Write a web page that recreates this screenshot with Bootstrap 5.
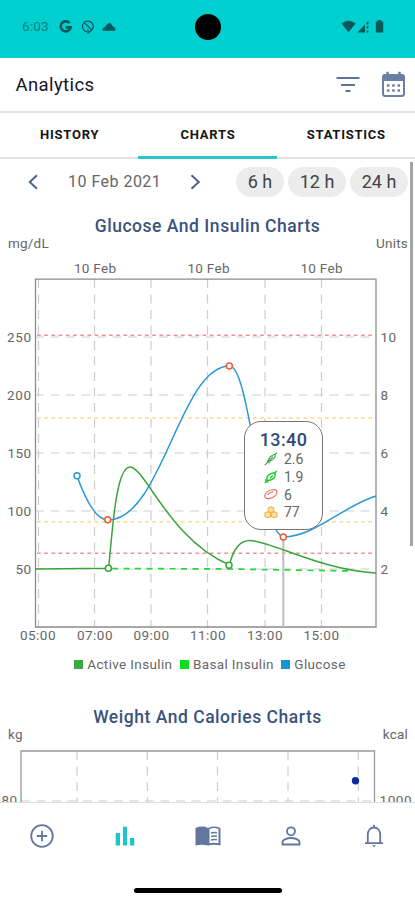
<!DOCTYPE html>
<html lang="en">
<head>
<meta charset="utf-8">
<meta name="viewport" content="width=device-width, initial-scale=1">
<title>Analytics</title>
<link href="https://cdn.jsdelivr.net/npm/bootstrap@5.3.0/dist/css/bootstrap.min.css" rel="stylesheet">
<style>
body{font-family:Roboto,"Liberation Sans",sans-serif;background:#fff;color:#666}
.phone{width:415px;height:900px}
svg{display:block;flex:none}
.statusbar{height:58px;background:#00cfcf;color:#07585a;font-size:13.5px;padding:0 31px 5px 22px}
.clock{letter-spacing:.2px;color:#087f80;width:29px}
.ic-blocked{margin-left:9px}
.ic-cloud{margin-left:7px}
.ic-signal{margin-left:1px}
.ic-battery{margin-left:5px}
.camera{width:26px;height:26px;left:195px;top:14px;background:#000}
.appbar{height:55px;border-bottom:2px solid #e2e2e2;padding:0 9px 0 15.5px}
.apptitle{font-size:18.5px;letter-spacing:.4px;color:#15151d;padding-top:1px}
.ic-calendar{margin-left:21px}
.tabs{height:46px;border-bottom:2px solid #e2e2e2}
.tabs .nav-link{height:46px;padding:0;font-size:13px;font-weight:700;letter-spacing:.75px;color:#151515;line-height:44px;border-radius:0;text-indent:1px}
.tabs .nav-link.active{border-bottom:3px solid #2cc5c5}
.scroller{height:644px;border-bottom:1px solid #ddd}
.range{height:46px;padding-left:25px;padding-right:7px}
.day{font-size:16px;letter-spacing:.48px;width:94px;white-space:nowrap;margin:0 26px 0 27px}
.chip{height:30px;border-radius:15px;background:#ececec;font-size:18px;line-height:30px;color:#424242;padding:0}
.chip-s{width:48px}.chip-m{width:58px}
.chart-title{font-size:17.5px;font-weight:500;letter-spacing:.53px;color:#3a537d;line-height:22px}
.first-chart{padding-top:10px}
.second-chart{padding-top:34px}
.units{font-size:13.5px;letter-spacing:.2px;line-height:16px;padding:0 7px 0 8px;margin-top:-2px;height:16px}
.units-tall{height:22px}
.ax{font-size:13.5px;fill:#666}
.legend{font-size:13.5px;letter-spacing:.36px;line-height:16px;gap:7.5px;padding-left:5px;margin-top:8px}
.sw{width:9px;height:9px;margin-right:4px}
.sw-active{background:#37a945}
.sw-basal{background:#0be01b}
.sw-glucose{background:#1795d3}
.tip{left:244px;top:216px;width:79px;height:109px;border:1px solid #777;border-radius:17px;padding-top:8px}
.tip-time{font-size:18px;font-weight:500;line-height:20px;letter-spacing:.4px;color:#314a76}
.tip-row{font-size:14px;line-height:18px;height:17.8px;gap:6px;padding-left:19px}
.thumb{left:410px;top:3px;width:3px;height:384px;background:#a5a5a5}
.bottomnav{height:66px}
.bottomnav a{color:#62779d}
.bottomnav a.on{color:#1cc6c6}
.home{width:148px;height:5px;margin:19px auto 0 134px;background:#000}
</style>
<script src="https://cdn.jsdelivr.net/npm/bootstrap@5.3.0/dist/js/bootstrap.bundle.min.js"></script>
</head>
<body>
<div class="phone overflow-hidden position-relative">
  <div class="statusbar d-flex align-items-center position-relative">
    <span class="clock">6:03</span>
    <svg class="ms-2" width="13" height="14" viewBox="0 0 13 14" fill="none" stroke="currentColor" stroke-width="2.6"><path d="M10.6 3.2A5 5 0 1 0 11.6 7.4H6.8"/></svg>
    <svg class="ic-blocked" width="14" height="14" viewBox="0 0 14 14" fill="none" stroke="currentColor" stroke-width="1.2"><path d="M6 11.800A5.400 5.400 0 1 1 11.300 9.500L7 13.200V9.500M3 2.500l8 7.500"/></svg>
    <svg class="ic-cloud" width="14" height="14" viewBox="0 0 14 14" fill="currentColor"><path d="M1.500 10.700C0 10.500 0 7.600 2.600 7.200 4 5.800 5.500 3 7.500 3c2 0 2.500 3 4 4 2.500.5 2.500 3.400 1 3.700z"/></svg>
    <div class="camera rounded-circle position-absolute"></div>
    <svg class="ms-auto" width="15" height="13" viewBox="0 0 15 13" fill="currentColor"><path d="M.5 3.500Q7.500-1.800 14.500 3.500L7.500 12.300z"/></svg>
    <svg class="ic-signal" width="13" height="13" viewBox="0 0 13 13" fill="currentColor"><path d="M.5 12.500 8 4.500v8zM9.500 3l1.800-2v3.500H9.500zM9.700 6h1.600v2.500H9.700zM9.700 10.500h1.600v2H9.700z"/></svg>
    <svg class="ic-battery" width="9" height="13" viewBox="0 0 9 13" fill="currentColor"><path d="M2.700 0h3.600v1.400h1.900v11.100H.8V1.400h1.900z"/></svg>
  </div>

  <header class="appbar d-flex align-items-center">
    <h1 class="apptitle fw-normal mb-0 me-auto">Analytics</h1>
    <svg width="24" height="18" viewBox="0 0 24 18" fill="none" stroke="#5f7499" stroke-width="2"><path d="M.5 2h23M5 9h14M9.500 15h5"/></svg>
    <svg class="ic-calendar" width="25" height="27" viewBox="0 0 25 27"><rect x="2" y="4" width="21" height="21" rx="2.500" fill="none" stroke="#6b7fa2" stroke-width="2"/><path d="M1.500 10V5.500Q1.500 3 4 3H21q2.500 0 2.500 2.500V10z" fill="#6b7fa2"/><path d="M6.500.8v4M18.500.8v4" stroke="#6b7fa2" stroke-width="2.500"/><path d="M6 14.500h13M6 19.500h13" stroke="#6b7fa2" stroke-width="2.500" stroke-dasharray="2.500 2.750"/></svg>
  </header>

  <nav class="tabs nav nav-justified flex-nowrap">
    <a class="nav-link w-100" href="#">HISTORY</a>
    <a class="nav-link w-100 active" href="#">CHARTS</a>
    <a class="nav-link w-100" href="#">STATISTICS</a>
  </nav>

  <main class="scroller position-relative overflow-hidden">
    <div class="range d-flex align-items-center">
      <svg width="16" height="16" viewBox="0 0 16 16" fill="none" stroke="#4a608c" stroke-width="1.900"><path d="M12 1.200 4.700 8l7.300 6.800"/></svg>
      <span class="day">10 Feb 2021</span>
      <svg width="16" height="16" viewBox="0 0 16 16" fill="none" stroke="#4a608c" stroke-width="1.900"><path d="M3.500 1.200 10.800 8l-7.300 6.800"/></svg>
      <div class="d-flex gap-1 ms-auto">
        <button class="chip chip-s border-0">6 h</button>
        <button class="chip chip-m border-0">12 h</button>
        <button class="chip chip-m border-0">24 h</button>
      </div>
    </div>

    <section class="position-relative">
      <h2 class="chart-title first-chart text-center mb-0">Glucose And Insulin Charts</h2>
      <div class="units units-tall d-flex justify-content-between"><span>mg/dL</span><span>Units</span></div>
      <svg width="415" height="391" viewBox="0 257 415 391" fill="none">
        <g stroke="#cdcdd1" stroke-width="1.200" stroke-dasharray="9 6.500">
          <path d="M38.500 279v348M94.500 279v348M151 279v348M207.500 279v348M265 279v348M321.500 279v348"/>
          <path d="M35 337h341M35 395h341M35 453h341M35 511h341M35 569h341"/>
        </g>
        <g stroke-width="1.400" stroke-dasharray="3.700 3.500">
          <path d="M37 335.200h337M37 553.200h337" stroke="#f58e8e"/>
          <path d="M37 418h337M37 521.700h337" stroke="#ffd98a"/>
        </g>
        <path d="M35.500 279.200H376V627H35.500z" stroke="#8c8c8c" stroke-width="1.300"/>
        <path d="M283.300 537v90" stroke="#bdbdbd" stroke-width="2"/>
        <path d="M112 568.500L230 569 352 571" stroke="#1edc32" stroke-width="1.700" stroke-dasharray="6 5.500"/>
        <path d="M35 569L108.500 568.300C112 540 115 467 130 467C145 467 170 540 229.500 565C233 550 240 540.500 250 540.500C270 540.500 320 570 376 573" stroke="#37a53b" stroke-width="1.500"/>
        <path d="M77 476C82 490 94 520 108 520C162 520 180 366 229.500 366C250 366 258 530 283.500 537C314 537 345 505 376 496" stroke="#2996d6" stroke-width="1.500"/>
        <g fill="#fff" stroke-width="1.500">
          <circle cx="77" cy="475.800" r="3" stroke="#2996d6"/>
          <circle cx="107.700" cy="519.700" r="3" stroke="#ec5b37"/>
          <circle cx="229.300" cy="366" r="3" stroke="#ec5b37"/>
          <circle cx="283.300" cy="537" r="3" stroke="#ec5b37"/>
          <circle cx="108.400" cy="568.300" r="3" stroke="#37a53b"/>
          <circle cx="229" cy="565.300" r="3" stroke="#37a53b"/>
        </g>
        <g class="ax">
          <text x="74" y="272.500" textLength="42">10 Feb</text><text x="187.500" y="272.500" textLength="42">10 Feb</text><text x="300.500" y="272.500" textLength="42">10 Feb</text>
          <text x="7" y="341.500" textLength="24">250</text><text x="7" y="399.500" textLength="24">200</text><text x="7.500" y="457.500" textLength="23.500">150</text><text x="7.500" y="515.500" textLength="23.500">100</text><text x="15.500" y="573.500" textLength="15.500">50</text>
          <text x="380.500" y="341.500" textLength="15.500">10</text><text x="380.500" y="399.500">8</text><text x="380.500" y="457.500">6</text><text x="380.500" y="515.500">4</text><text x="380.500" y="573.500">2</text>
          <text x="20" y="640" textLength="35.500">05:00</text><text x="77" y="640" textLength="35.500">07:00</text><text x="133.500" y="640" textLength="35.500">09:00</text><text x="190" y="640" textLength="35.500">11:00</text><text x="247" y="640" textLength="35.500">13:00</text><text x="303.500" y="640" textLength="35.500">15:00</text>
        </g>
      </svg>
      <div class="legend d-flex justify-content-center">
        <span class="d-flex align-items-center"><i class="sw sw-active"></i>Active Insulin</span>
        <span class="d-flex align-items-center"><i class="sw sw-basal"></i>Basal Insulin</span>
        <span class="d-flex align-items-center"><i class="sw sw-glucose"></i>Glucose</span>
      </div>
      <!-- reading for the selected time -->
      <div class="tip position-absolute bg-white">
        <div class="tip-time text-center">13:40</div>
        <div class="tip-row d-flex align-items-center"><svg width="14" height="14" viewBox="0 0 14 14" fill="none" stroke="#3da43f" stroke-width="1.100"><path d="M.8 13.200 4.500 9.500M4.500 9.500Q4 4.500 11.500 2 11 8.500 4.500 9.500L9 5M11.500 2 13 .8M3 8.500l2.800 2.700"/></svg>2.6</div>
        <div class="tip-row d-flex align-items-center"><svg width="14" height="14" viewBox="0 0 14 14" fill="none" stroke="#16cf27" stroke-width="1.400"><path d="M.8 13 3 10.500M3 10.500Q1.500 4 11 2.500 12.500 10 3 10.500zM11 2.500 13 1M6 8.300 8.800 5.500M1.200 9.500l3 3"/></svg>1.9</div>
        <div class="tip-row d-flex align-items-center"><svg width="14" height="14" viewBox="0 0 14 14" fill="none" stroke="#e86d60" stroke-width="1.100"><path d="M1 10.300C-.2 6 5 2.600 9.500 2.500c4.300 0 4.300 4 1.500 6.300C8.500 11 2.800 13 1 10.300zM3.500 8Q5 5.500 9.500 4.500"/></svg>6</div>
        <div class="tip-row d-flex align-items-center"><svg width="14" height="14" viewBox="0 0 14 14" fill="#ffe2ad" stroke="#f7b24a" stroke-width="1.200"><path d="M4.300 6.500V3L7 1.800 9.700 3v3.500L7 7.500zM1 11.500V8l2.700-1.200L6.500 8v3.500l-2.800 1zM7.500 11.500V8l2.800-1.200L13 8v3.500l-2.700 1z"/></svg>77</div>
      </div>
    </section>

    <section class="second-chart">
      <h2 class="chart-title text-center mb-0">Weight And Calories Charts</h2>
      <div class="units d-flex justify-content-between"><span>kg</span><span>kcal</span></div>
      <svg width="415" height="80" viewBox="0 742 415 80" fill="none">
        <path d="M77 751v70M147.300 751v70M217.500 751v70M288 751v70M358.300 751v70M21 801h353" stroke="#cdcdd1" stroke-width="1.200" stroke-dasharray="9 6.500"/>
        <path d="M21 830V751H374.500V830" stroke="#999" stroke-width="1.300"/>
        <circle cx="355.500" cy="780.800" r="3.700" fill="#0a2a9c"/>
        <g class="ax"><text x="1.500" y="805" textLength="15.500">80</text><text x="379.500" y="805" textLength="32">1000</text></g>
      </svg>
    </section>
    <div class="thumb position-absolute"></div>
  </main>

  <nav class="bottomnav nav nav-justified flex-nowrap align-items-center">
    <a class="w-100 d-flex justify-content-center" href="#"><svg width="24" height="24" viewBox="0 0 24 24" fill="none" stroke="currentColor" stroke-width="1.800"><circle cx="12" cy="12" r="10.800"/><path d="M12 6.800v10.400M6.800 12h10.400"/></svg></a>
    <a class="w-100 d-flex justify-content-center on" href="#"><svg width="20" height="20" viewBox="0 0 20 20" fill="currentColor"><path d="M.7 7h4.300v12.500H.7zM8 .8h4v18.700H8zM15 12h4.300v7.500H15z"/></svg></a>
    <a class="w-100 d-flex justify-content-center" href="#"><svg width="26" height="20" viewBox="0 0 26 20"><path d="M.5 2Q7-.8 13 2q6-2.800 12.500 0v17.500Q19 17.800 13 19.500 7 17.800.5 19.500z" fill="currentColor"/><path d="M14.500 3q4-1.800 9-.2v14.500q-4.500-1.200-9 0z" fill="#fff"/><path d="M16 7q3-1 6-.2M16 10.500q3-1 6-.2M16 14q3-1 6-.2" stroke="currentColor" stroke-width="1.500" fill="none"/></svg></a>
    <a class="w-100 d-flex justify-content-center" href="#"><svg width="20" height="20" viewBox="0 0 20 20" fill="none" stroke="currentColor" stroke-width="1.800"><circle cx="10" cy="5.300" r="4"/><path d="M1.500 18.500v-2.300C1.500 13.500 6.500 12 10 12s8.500 1.500 8.500 4.200v2.300z"/></svg></a>
    <a class="w-100 d-flex justify-content-center" href="#"><svg width="20" height="24" viewBox="0 0 20 24" fill="none" stroke="currentColor" stroke-width="1.800"><path d="M1 19.200h18M3.800 19V10.500C3.800 6.500 6.300 3.500 10 3.500s6.200 3 6.200 7V19M10 .8v2.500"/><path d="M8 21.200h4l-2 2z" fill="currentColor" stroke="none"/></svg></a>
  </nav>
  <div class="home rounded-pill"></div>
</div>
</body>
</html>
